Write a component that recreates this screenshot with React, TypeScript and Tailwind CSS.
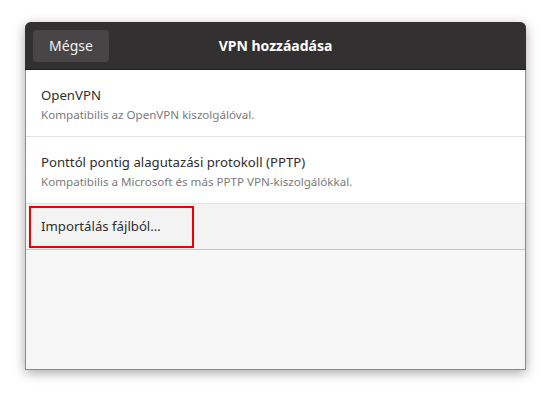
const rows = [
  { title: 'OpenVPN', sub: 'Kompatibilis az OpenVPN kiszolgálóval.' },
  { title: 'Ponttól pontig alagutazási protokoll (PPTP)', sub: 'Kompatibilis a Microsoft és más PPTP VPN-kiszolgálókkal.' },
];

const App = () => {
  return (
    <div className="w-[552px] h-[399px] bg-white pt-[22px] pl-[25px]" style={{ fontFamily: '"Noto Sans", "Open Sans", sans-serif' }}>
      <div className="w-[501px] h-[348px] flex flex-col border border-[#8b8b8b] border-t-0 rounded-t-[6px] bg-[#f6f6f6] shadow-[0_3px_12px_rgba(0,0,0,0.35)]">
        <header className="relative h-[48px] -mx-px flex items-center bg-[#323030] rounded-t-[6px] border-b border-[#1f1e1e] px-[8px]">
          <button className="w-[76px] h-[32px] rounded-[4px] bg-[#474545] text-[#f2f2f2] text-[14px]">Mégse</button>
          <div className="absolute inset-0 flex items-center justify-center text-white text-[14px] font-bold pointer-events-none">VPN hozzáadása</div>
        </header>
        <div className="flex flex-col">
          {rows.map((r) => (
            <div key={r.title} className="h-[67px] bg-white border-b border-[#e3e3e3] px-[15px] pt-[15px]">
              <div className="text-[13.2px] leading-[20px] text-[#2e2e2e]">{r.title}</div>
              <div className="text-[11.6px] leading-[20px] text-[#7a7a7a]">{r.sub}</div>
            </div>
          ))}
          <div className="relative h-[46px] bg-[#f3f3f3] border-b border-[#c8c8c8] px-[15px] flex items-center">
            <span className="text-[13.2px] text-[#2e2e2e]">Importálás fájlból…</span>
            <div className="absolute left-[3px] top-[2px] w-[165px] h-[42px] border-2 border-[#ee0000]" />
          </div>
        </div>
      </div>
    </div>
  );
};

export default App;
